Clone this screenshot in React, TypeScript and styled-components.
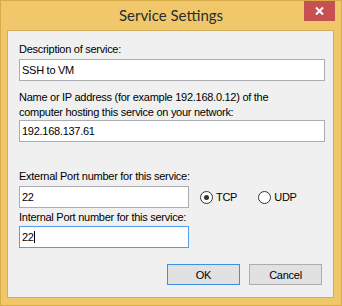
import React from 'react';
import styled, { createGlobalStyle } from 'styled-components';

// Windows 8 style "Service Settings" dialog

const GlobalStyle = createGlobalStyle`
  html, body {
    margin: 0;
    padding: 0;
    background: #ffffff;
  }
  * {
    box-sizing: border-box;
  }
`;

const Window = styled.div`
  width: 342px;
  height: 306px;
  display: flex;
  flex-direction: column;
  background: #f0c86b;
  border: 1px solid #d9aa48;
  font-family: 'Liberation Sans', Arial, sans-serif;
  font-size: 11px;
  letter-spacing: -0.27px;
  color: #000;
`;

const TitleBar = styled.div`
  height: 29px;
  display: grid;
  grid-template-columns: 1fr auto 1fr;
  align-items: start;
`;

const Title = styled.div`
  grid-column: 2;
  padding-top: 5px;
  font-family: Lato, 'Noto Sans', sans-serif;
  font-size: 15px;
  line-height: 19px;
  letter-spacing: 0;
  color: #2b2b2b;
`;

const CloseButton = styled.div`
  grid-column: 3;
  justify-self: end;
  width: 31px;
  height: 20px;
  margin-right: 6px;
  background: #c75050;
  display: flex;
  align-items: center;
  justify-content: center;
`;

const Client = styled.div`
  flex: 1;
  margin: 0 7px 7px 6px;
  border: 1px solid #d2ad5c;
  background: #f0f0f0;
  padding: 11px 8px 0 11px;
  display: flex;
  flex-direction: column;
`;

const Label = styled.div<{ $gap?: number }>`
  line-height: 15px;
  margin-top: ${(p) => p.$gap ?? 0}px;
  white-space: nowrap;
`;

const TextBox = styled.div<{ $width?: number; $focused?: boolean; $gap?: number }>`
  height: 22px;
  width: ${(p) => (p.$width ? `${p.$width}px` : 'auto')};
  margin-top: ${(p) => p.$gap ?? 0}px;
  background: #fff;
  border: 1px solid ${(p) => (p.$focused ? '#569de5' : '#abadb3')};
  padding: 0 2px;
  display: flex;
  align-items: center;
  line-height: 14px;
  flex-shrink: 0;
`;

const Caret = styled.span`
  display: inline-block;
  width: 1px;
  height: 12px;
  background: #000;
`;

const PortRow = styled.div`
  display: flex;
  align-items: center;
  margin-top: 2px;
`;

const RadioGroup = styled.div`
  display: flex;
  align-items: center;
  gap: 21px;
  margin-left: 11px;
`;

const RadioOption = styled.label`
  display: flex;
  align-items: center;
  gap: 3px;
  line-height: 14px;
`;

const RadioCircle = styled.span<{ $checked?: boolean }>`
  width: 13px;
  height: 13px;
  border-radius: 50%;
  border: 1px solid #333;
  background: #fff;
  display: flex;
  align-items: center;
  justify-content: center;

  &::after {
    content: '';
    display: ${(p) => (p.$checked ? 'block' : 'none')};
    width: 5px;
    height: 5px;
    border-radius: 50%;
    background: #333;
  }
`;

const ButtonRow = styled.div`
  display: flex;
  justify-content: flex-end;
  gap: 9px;
  margin-top: 16px;
  padding-right: 3px;
`;

const Button = styled.div<{ $default?: boolean }>`
  width: 73px;
  height: 21px;
  background: #e1e1e1;
  border: 1px solid ${(p) => (p.$default ? '#3c8ee6' : '#adadad')};
  display: flex;
  align-items: center;
  justify-content: center;
  line-height: 14px;
`;

const CloseIcon = () => (
  <svg width="9" height="8" viewBox="0 0 9 8">
    <path d="M1 0.5 L8 7.5 M8 0.5 L1 7.5" stroke="#fff" strokeWidth="2" />
  </svg>
);

const Radio: React.FC<{ label: string; checked?: boolean }> = ({ label, checked }) => (
  <RadioOption>
    <RadioCircle $checked={checked} />
    <span>{label}</span>
  </RadioOption>
);

export default function App() {
  return (
    <>
      <GlobalStyle />
      <Window>
        <TitleBar>
          <Title>Service Settings</Title>
          <CloseButton>
            <CloseIcon />
          </CloseButton>
        </TitleBar>

        <Client>
          <Label>Description of service:</Label>
          <TextBox $gap={2}>SSH to VM</TextBox>

          <Label $gap={9}>
            Name or IP address (for example 192.168.0.12) of the
            <br />
            computer hosting this service on your network:
          </Label>
          <TextBox>192.168.137.61</TextBox>

          <Label $gap={27}>External Port number for this service:</Label>
          <PortRow>
            <TextBox $width={170}>22</TextBox>
            <RadioGroup>
              <Radio label="TCP" checked />
              <Radio label="UDP" />
            </RadioGroup>
          </PortRow>

          <Label $gap={2}>Internal Port number for this service:</Label>
          <TextBox $width={170} $focused $gap={1}>
            22
            <Caret />
          </TextBox>

          <ButtonRow>
            <Button $default>OK</Button>
            <Button>Cancel</Button>
          </ButtonRow>
        </Client>
      </Window>
    </>
  );
}
